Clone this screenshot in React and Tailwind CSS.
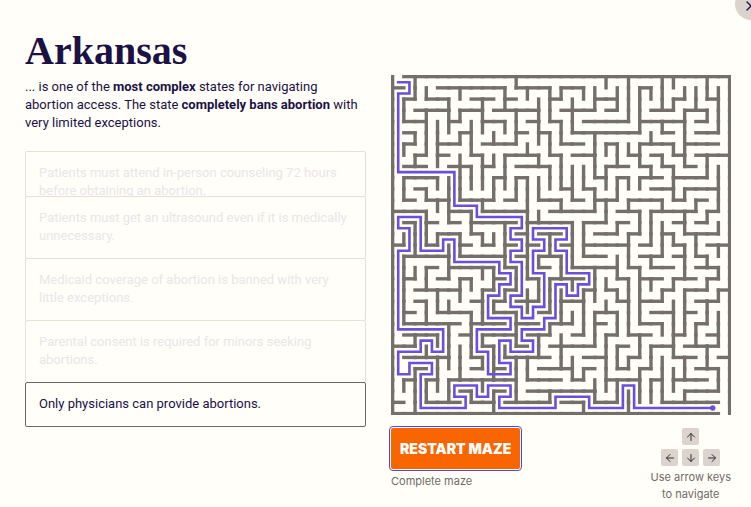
import React from "react";
import { ArrowUp, ArrowLeft, ArrowDown, ArrowRight, X } from "lucide-react";

const CELLS = 30;
const STEP = 337 / CELLS;
const at = (n) => 1.6 + n * STEP;

// Horizontal walls: one entry per grid row, as [from, to] pairs of grid columns.
const ROWS = [
  [[1, 30]],
  [[0, 1], [4, 10], [11, 14], [15, 17], [22, 23]],
  [[1, 2], [3, 5], [7, 9], [10, 11], [14, 15], [18, 20], [25, 26], [28, 29]],
  [[2, 5], [6, 8], [9, 13], [15, 18], [19, 20], [23, 25], [26, 28]],
  [[1, 3], [5, 6], [8, 10], [12, 13], [14, 15], [17, 21], [22, 26], [27, 28]],
  [[1, 2], [6, 7], [11, 12], [13, 14], [16, 22], [24, 25], [27, 29]],
  [[1, 2], [4, 6], [8, 11], [15, 17], [19, 20], [22, 25], [26, 29]],
  [[2, 3], [4, 5], [7, 8], [10, 13], [14, 15], [16, 18], [21, 22], [23, 24], [25, 26], [27, 30]],
  [[1, 3], [5, 7], [8, 9], [11, 14], [19, 21], [22, 23], [24, 25], [26, 27]],
  [[1, 4], [9, 10], [11, 12], [18, 19], [20, 21], [22, 24], [25, 28]],
  [[2, 3], [15, 16], [17, 18], [23, 25], [26, 29]],
  [[1, 2], [3, 5], [6, 9], [10, 11], [13, 15], [16, 17], [18, 20], [21, 24], [25, 26], [27, 28]],
  [[0, 3], [5, 7], [8, 12], [14, 18], [20, 22], [23, 27], [28, 29]],
  [[1, 2], [3, 4], [5, 6], [7, 11], [12, 16], [17, 19], [20, 21], [25, 26], [27, 28]],
  [[4, 6], [7, 8], [11, 12], [13, 15], [18, 20], [21, 22], [24, 25], [26, 29]],
  [[0, 1], [3, 4], [6, 7], [8, 9], [10, 11], [12, 13], [15, 16], [17, 21], [22, 23], [25, 26], [28, 30]],
  [[1, 5], [6, 10], [11, 12], [13, 15], [17, 19], [22, 24], [25, 26], [27, 28]],
  [[3, 4], [5, 9], [10, 11], [13, 14], [16, 20], [21, 22], [23, 25], [27, 29]],
  [[1, 2], [4, 5], [6, 7], [9, 10], [12, 13], [14, 17], [20, 21], [22, 24], [25, 27], [28, 29]],
  [[2, 6], [8, 9], [10, 11], [17, 18], [19, 20], [24, 25], [26, 28], [29, 30]],
  [[2, 3], [7, 8], [9, 10], [11, 13], [15, 17], [20, 21], [22, 24], [27, 29]],
  [[1, 2], [4, 7], [9, 11], [13, 14], [18, 20], [23, 25], [26, 27]],
  [[1, 6], [7, 10], [11, 13], [14, 16], [18, 19], [22, 24], [27, 28]],
  [[1, 4], [6, 7], [8, 11], [12, 14], [16, 17], [19, 20], [21, 23], [25, 26], [28, 29]],
  [[0, 2], [8, 9], [11, 12], [14, 18], [20, 21], [23, 25], [26, 29]],
  [[1, 5], [7, 8], [10, 14], [17, 19], [21, 22], [25, 27], [29, 30]],
  [[2, 3], [7, 8], [9, 10], [13, 16], [17, 18], [20, 21], [22, 23], [27, 29]],
  [[1, 2], [3, 4], [5, 11], [12, 15], [16, 17], [19, 22], [23, 24], [25, 28]],
  [[6, 7], [9, 10], [12, 18], [26, 29]],
  [[0, 1], [3, 6], [7, 9], [10, 14], [15, 17], [18, 20], [24, 29]],
  [[0, 29]],
];

// Vertical walls: one entry per grid column, as [from, to] pairs of grid rows.
const COLUMNS = [
  [[0, 30]],
  [[2, 4], [6, 7], [9, 11], [14, 15], [16, 22], [27, 28]],
  [[0, 2], [5, 6], [7, 8], [13, 16], [17, 18], [23, 24], [26, 30]],
  [[1, 2], [3, 7], [10, 11], [12, 15], [17, 19], [20, 22], [24, 25], [27, 29]],
  [[4, 8], [9, 10], [11, 12], [14, 15], [19, 21], [23, 24], [25, 28]],
  [[2, 5], [9, 13], [15, 18], [20, 21], [22, 26], [27, 29]],
  [[1, 2], [3, 4], [5, 6], [7, 11], [14, 16], [18, 20], [24, 27]],
  [[4, 7], [8, 10], [12, 14], [18, 19], [21, 25], [28, 29]],
  [[2, 5], [7, 10], [11, 12], [14, 15], [17, 18], [19, 22], [23, 24], [25, 26], [27, 28]],
  [[5, 6], [7, 8], [9, 11], [14, 15], [17, 19], [20, 21], [24, 27], [28, 30]],
  [[1, 3], [4, 5], [7, 10], [13, 17], [19, 20], [24, 25]],
  [[0, 1], [3, 6], [9, 11], [17, 19], [21, 24], [25, 29]],
  [[1, 2], [6, 7], [9, 18], [19, 21], [25, 27]],
  [[2, 6], [7, 8], [9, 11], [12, 13], [16, 17], [18, 20], [23, 25]],
  [[1, 4], [5, 7], [8, 10], [14, 16], [18, 21], [22, 23], [28, 29]],
  [[1, 2], [4, 6], [7, 10], [11, 12], [16, 18], [19, 22], [23, 26]],
  [[2, 5], [8, 11], [13, 17], [18, 19], [21, 22], [25, 27]],
  [[1, 2], [8, 10], [13, 16], [19, 23], [26, 27], [29, 30]],
  [[1, 3], [5, 9], [10, 12], [17, 20], [21, 24], [27, 29]],
  [[0, 1], [6, 7], [8, 10], [11, 13], [18, 19], [20, 21], [23, 28]],
  [[1, 3], [6, 8], [9, 11], [13, 14], [16, 18], [19, 20], [21, 23], [24, 26], [27, 29]],
  [[0, 4], [6, 7], [9, 10], [11, 12], [14, 17], [18, 23], [25, 26], [28, 30]],
  [[1, 5], [6, 8], [9, 10], [12, 14], [17, 22], [23, 25], [26, 29]],
  [[1, 2], [5, 6], [8, 9], [12, 15], [16, 17], [18, 19], [24, 26], [27, 29]],
  [[0, 3], [4, 5], [7, 8], [11, 12], [13, 16], [19, 20], [22, 23], [25, 29]],
  [[0, 1], [2, 3], [6, 7], [8, 11], [14, 15], [18, 19], [20, 25], [26, 28]],
  [[1, 2], [3, 8], [10, 11], [12, 14], [15, 18], [19, 23], [25, 27], [28, 29]],
  [[1, 3], [11, 12], [14, 16], [22, 24]],
  [[0, 2], [3, 4], [7, 9], [12, 13], [16, 17], [18, 19], [20, 22], [24, 26]],
  [[1, 5], [8, 12], [13, 14], [15, 16], [17, 18], [19, 20], [21, 24], [26, 28]],
  [[0, 30]],
];

// The solved route through the maze, cell by cell at each turn.
const ROUTE = [
  [0, 0], [1, 0], [1, 1], [0, 1], [0, 8], [5, 8], [5, 11], [7, 11], [7, 12], [11, 12],
  [11, 13], [10, 13], [10, 14], [11, 14], [11, 15], [10, 15], [10, 16], [11, 16], [11, 19], [10, 19],
  [10, 20], [11, 20], [11, 21], [12, 21], [12, 20], [13, 20], [13, 17], [12, 17], [12, 15], [13, 15],
  [13, 14], [12, 14], [12, 13], [15, 13], [15, 14], [14, 14], [14, 15], [15, 15], [15, 17], [17, 17],
  [17, 18], [16, 18], [16, 19], [15, 19], [15, 18], [14, 18], [14, 21], [13, 21], [13, 22], [11, 22],
  [11, 23], [12, 23], [12, 24], [10, 24], [10, 23], [9, 23], [9, 25], [10, 25], [10, 26], [8, 26],
  [8, 24], [7, 24], [7, 22], [10, 22], [10, 21], [8, 21], [8, 19], [9, 19], [9, 18], [10, 18],
  [10, 17], [9, 17], [9, 16], [5, 16], [5, 14], [4, 14], [4, 15], [2, 15], [2, 12], [0, 12],
  [0, 13], [1, 13], [1, 15], [0, 15], [0, 22], [4, 22], [4, 24], [3, 24], [3, 23], [2, 23],
  [2, 24], [0, 24], [0, 26], [1, 26], [1, 25], [3, 25], [3, 26], [2, 26], [2, 29], [6, 29],
  [6, 28], [5, 28], [5, 27], [7, 27], [7, 28], [8, 28], [8, 27], [10, 27], [10, 28], [9, 28],
  [9, 29], [14, 29], [14, 28], [17, 28], [17, 29], [20, 29], [20, 27], [21, 27], [21, 29], [28, 29],
];

const units = (spans) =>
  spans.flatMap(([from, to]) => Array.from({ length: to - from }, (_, k) => from + k));

function Maze() {
  const points = ROUTE.map(([x, y]) => `${at(x + 0.5)},${at(y + 0.5)}`).join(" ");
  return (
    <svg viewBox="0 0 340 340" className="block w-full" role="img" aria-label="Maze">
      <g stroke="#756f6a" strokeWidth="3.4" strokeLinecap="square">
        {ROWS.map((spans, y) =>
          units(spans).map((x) => (
            <line key={`h${x}-${y}`} x1={at(x)} y1={at(y)} x2={at(x + 1)} y2={at(y)} />
          ))
        )}
        {COLUMNS.map((spans, x) =>
          units(spans).map((y) => (
            <line key={`v${x}-${y}`} x1={at(x)} y1={at(y)} x2={at(x)} y2={at(y + 1)} />
          ))
        )}
      </g>
      <polyline points={points} fill="none" stroke="#6a4fdc" strokeWidth="2.6" strokeLinecap="square" />
      <circle cx={at(28.5)} cy={at(29.5)} r="2.7" fill="#6a4fdc" />
    </svg>
  );
}

const FACTS = [
  "Patients must get an ultrasound even if it is medically unnecessary.",
  "Medicaid coverage of abortion is banned with very little exceptions.",
  "Parental consent is required for minors seeking abortions.",
];

function ArrowKey({ icon: Icon, label, className = "" }) {
  return (
    <button
      type="button"
      aria-label={label}
      className={`flex size-[17px] items-center justify-center rounded-xs bg-[#ddd3cd] text-[#2f2b33] ${className}`}
    >
      <Icon size={12} strokeWidth={2} />
    </button>
  );
}

export default function App() {
  return (
    <main className="relative min-h-screen overflow-hidden bg-[#fffef9] pt-7 pr-5 pl-[25px] font-['Roboto','Liberation_Sans',sans-serif] text-[#1b1145]">
      <button
        type="button"
        aria-label="Close"
        className="absolute -top-3 -right-4 flex size-8 items-center justify-center rounded-full bg-[#ddd3cd] pt-1"
      >
        <X size={16} strokeWidth={2} />
      </button>

      <div className="grid grid-cols-[341fr_340fr] gap-[25px]">
        <section>
          <h1 className="font-['Liberation_Serif',serif] text-[40px] leading-[46px] font-bold">Arkansas</h1>
          <p className="mt-1 text-[13px] leading-[18px]">
            ... is one of the <strong className="font-bold">most complex</strong> states for navigating abortion
            access. The state <strong className="font-bold">completely bans abortion</strong> with very limited
            exceptions.
          </p>

          <ul className="mt-[19px] text-[13px] leading-[18px]">
            <li className="h-[46px] overflow-hidden rounded-xs border border-[#e5e1d6] px-[13px] py-3 text-[#e9e6e7]">
              Patients must attend in-person counseling 72 hours before obtaining an abortion.
            </li>
            {FACTS.map((fact) => (
              <li
                key={fact}
                className="-mt-px rounded-xs border border-[#e5e1d6] px-[13px] pt-3 pb-[13px] text-[#e9e6e7]"
              >
                {fact}
              </li>
            ))}
            <li className="relative -mt-px rounded-xs border border-[#6b6867] px-[13px] pt-3 pb-[13px]">
              Only physicians can provide abortions.
            </li>
          </ul>
        </section>

        <section className="pt-[47px] font-['Inter','Liberation_Sans',sans-serif] text-[11px] leading-[17px] text-[#6f6a68]">
          <Maze />
          <div className="mt-[13px] flex items-start justify-between">
            <div>
              <button
                type="button"
                className="h-[41px] rounded-xs bg-[#f96500] px-[9px] text-sm font-black text-white outline-1 outline-offset-1 outline-[#5b45d6]"
              >
                RESTART MAZE
              </button>
              <p className="mt-1">Complete maze</p>
            </div>
            <div className="flex flex-col items-center">
              <div className="grid grid-cols-3 gap-1">
                <ArrowKey icon={ArrowUp} label="Up" className="col-start-2" />
                <ArrowKey icon={ArrowLeft} label="Left" className="col-start-1" />
                <ArrowKey icon={ArrowDown} label="Down" />
                <ArrowKey icon={ArrowRight} label="Right" />
              </div>
              <p className="mt-[3px] text-center">
                Use arrow keys
                <br />
                to navigate
              </p>
            </div>
          </div>
        </section>
      </div>
    </main>
  );
}
